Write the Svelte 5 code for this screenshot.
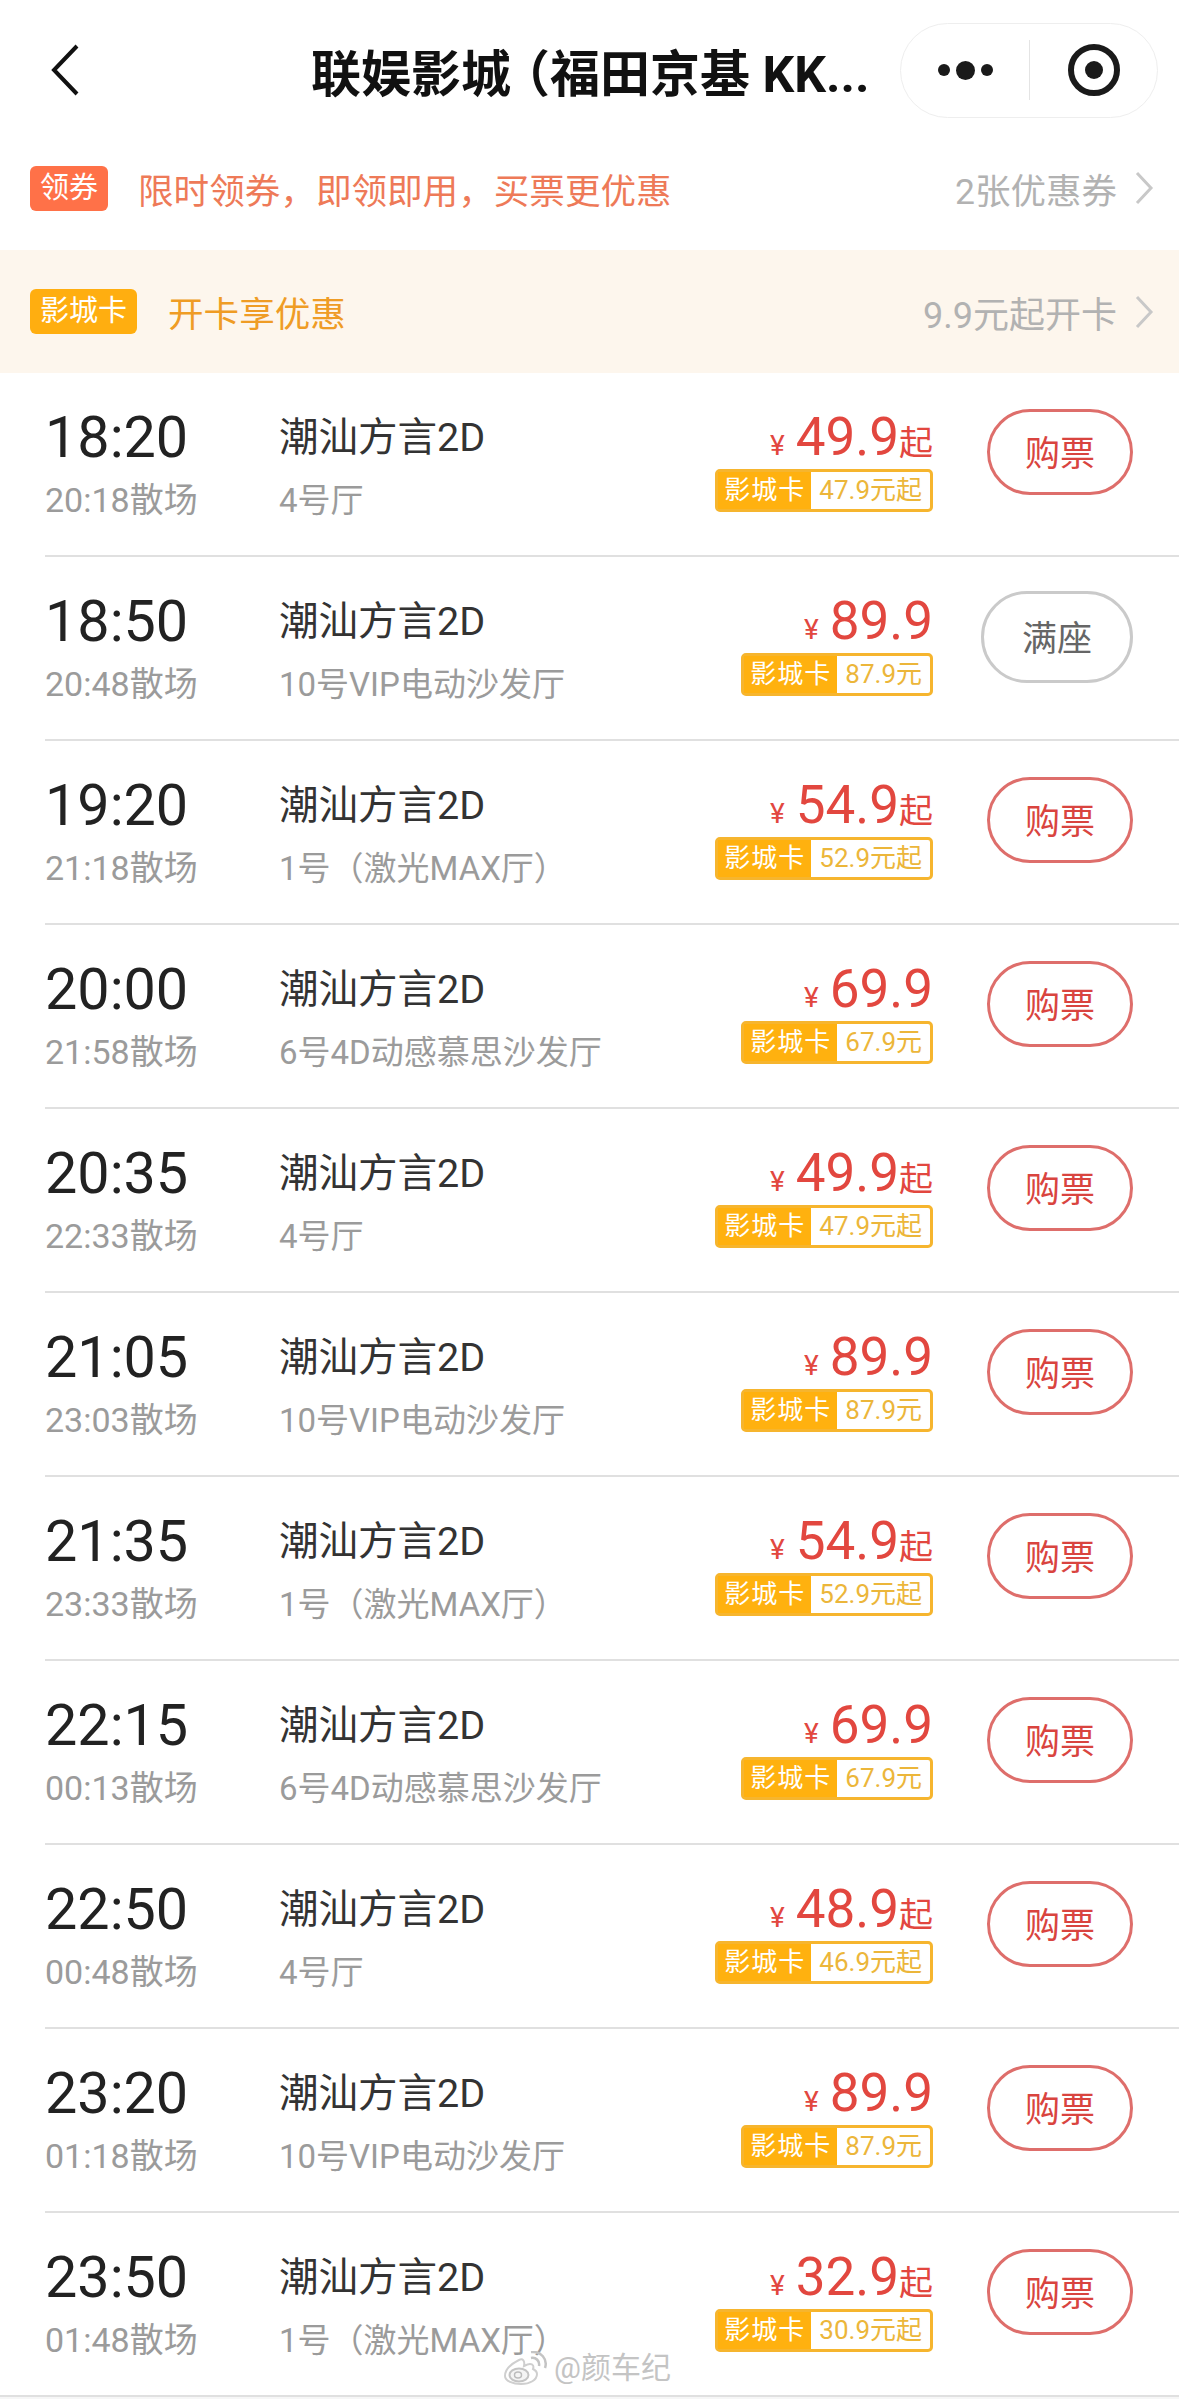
<script>
  const halls = {
    four: '4号厅',
    vip: '10号VIP电动沙发厅',
    max: '1号（激光MAX厅）',
    d4: '6号4D动感慕思沙发厅'
  };

  const shows = [
    { start: '18:20', end: '20:18', hall: halls.four, price: '49.9', card: '47.9', from: true },
    { start: '18:50', end: '20:48', hall: halls.vip, price: '89.9', card: '87.9', from: false, full: true },
    { start: '19:20', end: '21:18', hall: halls.max, price: '54.9', card: '52.9', from: true },
    { start: '20:00', end: '21:58', hall: halls.d4, price: '69.9', card: '67.9', from: false },
    { start: '20:35', end: '22:33', hall: halls.four, price: '49.9', card: '47.9', from: true },
    { start: '21:05', end: '23:03', hall: halls.vip, price: '89.9', card: '87.9', from: false },
    { start: '21:35', end: '23:33', hall: halls.max, price: '54.9', card: '52.9', from: true },
    { start: '22:15', end: '00:13', hall: halls.d4, price: '69.9', card: '67.9', from: false },
    { start: '22:50', end: '00:48', hall: halls.four, price: '48.9', card: '46.9', from: true },
    { start: '23:20', end: '01:18', hall: halls.vip, price: '89.9', card: '87.9', from: false },
    { start: '23:50', end: '01:48', hall: halls.max, price: '32.9', card: '30.9', from: true }
  ];
</script>

<div class="page">
  <header class="nav">
    <svg class="back" width="32" height="54" viewBox="0 0 32 54">
      <path d="M29 3 L6 27 L29 51" fill="none" stroke="#111" stroke-width="4" />
    </svg>
    <h1>联娱影城<span class="paren">（</span>福田京基 KK...</h1>
    <div class="capsule">
      <div class="dots">
        <span class="dot"></span>
        <span class="dot big"></span>
        <span class="dot"></span>
      </div>
      <span class="capsule-line"></span>
      <svg width="52" height="52" viewBox="0 0 52 52">
        <circle cx="26" cy="26" r="23" fill="none" stroke="#1a1a1a" stroke-width="6" />
        <circle cx="26" cy="26" r="9" fill="#1a1a1a" />
      </svg>
    </div>
  </header>

  <div class="promo coupon">
    <span class="tag coupon-tag">领券</span>
    <span class="promo-text coupon-text">限时领券，即领即用，买票更优惠</span>
    <span class="promo-right coupon-right">2张优惠券</span>
    <svg class="chev" width="19" height="34" viewBox="0 0 19 34">
      <path d="M2 2 L16 17 L2 32" fill="none" stroke="#c8c8c8" stroke-width="3" />
    </svg>
  </div>

  <div class="promo card">
    <span class="tag card-tag">影城卡</span>
    <span class="promo-text card-text">开卡享优惠</span>
    <span class="promo-right">9.9元起开卡</span>
    <svg class="chev" width="19" height="34" viewBox="0 0 19 34">
      <path d="M2 2 L16 17 L2 32" fill="none" stroke="#c8c8c8" stroke-width="3" />
    </svg>
  </div>

  <ul class="list">
    {#each shows as show}
      <li class="row">
        <div class="times">
          <div class="start">{show.start}</div>
          <div class="end">{show.end}散场</div>
        </div>
        <div class="info">
          <div class="lang">潮汕方言2D</div>
          <div class="hall">{show.hall}</div>
        </div>
        <div class="prices">
          <div class="price">
            <span class="yen">¥</span><span class="num">{show.price}</span>{#if show.from}<span class="from">起</span>{/if}
          </div>
          <div class="badge">
            <span class="badge-name">影城卡</span>
            <span class="badge-price">{show.card}元{show.from ? '起' : ''}</span>
          </div>
        </div>
        <div class="action">
          {#if show.full}
            <button class="btn full">满座</button>
          {:else}
            <button class="btn">购票</button>
          {/if}
        </div>
      </li>
    {/each}
  </ul>

  <div class="watermark">
    <svg width="44" height="34" viewBox="0 0 44 34">
      <path d="M15 9 C7 13 1 19 1 25 C1 30 9 33 17 33 C26 33 33 29 33 23 C33 20 31 19 29 18 C30 15 29 13 26 13 C24 13 22 14 20 15 C21 10 19 7 15 9 Z" fill="#fff" stroke="#cfcfcf" stroke-width="2" />
      <ellipse cx="15" cy="24" rx="9.500" ry="6.500" fill="#f4f4f4" stroke="#c4c4c4" stroke-width="2" />
      <ellipse cx="14" cy="24" rx="3.500" ry="3" fill="none" stroke="#bcbcbc" stroke-width="1.500" />
      <path d="M27 7 C32 6 36 10 35 15 M27 1 C37 0 44 8 41 17" fill="none" stroke="#c4c4c4" stroke-width="2.500" />
    </svg>
    <span>@颜车纪</span>
  </div>
</div>

<style>
  :global(body) {
    margin: 0;
    background: #fff;
  }

  .page {
    position: relative;
    width: 1179px;
    height: 2399px;
    overflow: hidden;
    background: #f6f6f6;
    font-family: Roboto, "Noto Sans CJK SC", sans-serif;
    color: #222;
  }

  .nav {
    height: 140px;
    box-sizing: border-box;
    padding: 0 21px 0 48px;
    display: flex;
    align-items: center;
    background: #fff;
  }

  .nav h1 {
    margin: 0 0 0 231px;
    font-size: 50px;
    font-weight: 700;
    color: #111;
    white-space: nowrap;
  }

  .paren {
    font-feature-settings: "halt";
    margin-left: 14px;
  }

  .back {
    flex-shrink: 0;
  }

  .capsule {
    margin-left: auto;
    width: 258px;
    height: 95px;
    box-sizing: border-box;
    border: 1.500px solid #eee;
    border-radius: 48px;
    display: flex;
    align-items: center;
    padding-left: 37px;
    flex-shrink: 0;
  }

  .dots {
    display: flex;
    align-items: center;
    gap: 6px;
  }

  .dot {
    width: 12px;
    height: 12px;
    border-radius: 50%;
    background: #1a1a1a;
  }

  .dot.big {
    width: 19px;
    height: 19px;
  }

  .capsule-line {
    width: 1px;
    height: 60px;
    background: #e4e4e4;
    margin: 0 38px 0 36px;
  }

  .promo {
    display: flex;
    align-items: center;
    box-sizing: border-box;
    padding: 0 25px 0 30px;
  }

  .coupon {
    height: 110px;
    padding-bottom: 14px;
    background: #fff;
  }

  .card {
    height: 123px;
    background: #fdf6ed;
  }

  .tag {
    height: 45px;
    line-height: 45px;
    border-radius: 6px;
    color: #fff;
    font-size: 29px;
    text-align: center;
  }

  .coupon-tag {
    width: 78px;
    background: #ff7148;
  }

  .card-tag {
    width: 107px;
    background: #ffae10;
  }

  .promo-text {
    font-size: 35.600px;
  }

  .coupon-text {
    margin-left: 30px;
    color: #ee7a58;
  }

  .card-text {
    margin-left: 31px;
    color: #ef9c25;
  }

  .promo-right {
    margin-left: auto;
    font-size: 36px;
    color: #b2b2b2;
  }

  .coupon-right {
    font-size: 35.500px;
  }

  .chev {
    margin-left: 18px;
  }

  .list {
    list-style: none;
    margin: 0;
    padding: 0;
    background: #fff;
  }

  .row {
    height: 184px;
    box-sizing: border-box;
    margin-left: 45px;
    border-bottom: 2px solid #e0e0e0;
    display: flex;
    padding-right: 46px;
  }

  .row:last-child {
    margin-left: 0;
    padding-left: 45px;
  }

  .times {
    width: 234px;
    flex-shrink: 0;
    padding-top: 35px;
  }

  .start {
    font-size: 57.500px;
    line-height: 60px;
    color: #222;
  }

  .end,
  .hall {
    font-size: 33px;
    line-height: 44px;
    color: #9b9b9b;
    white-space: nowrap;
  }

  .end {
    margin-top: 10px;
    font-size: 34px;
  }

  .hall {
    margin-top: 11px;
  }

  .info {
    flex: 1;
    padding-top: 35px;
  }

  .lang {
    font-size: 39.500px;
    line-height: 60px;
    color: #333;
    white-space: nowrap;
  }

  .prices {
    flex-shrink: 0;
    padding-top: 34px;
    display: flex;
    flex-direction: column;
    align-items: flex-end;
  }

  .price {
    height: 60px;
    line-height: 60px;
    color: #e2473f;
    white-space: nowrap;
    display: flex;
    align-items: baseline;
  }

  .yen {
    font-size: 28px;
    margin-right: 11px;
  }

  .num {
    font-size: 53px;
  }

  .from {
    font-size: 34px;
  }

  .badge {
    margin-top: 2px;
    height: 43px;
    box-sizing: border-box;
    border: 3px solid #f6b52e;
    border-radius: 5px;
    display: flex;
    font-size: 26px;
    line-height: 37px;
    white-space: nowrap;
  }

  .badge-name {
    background: #ffb10f;
    color: #fff;
    padding: 0 6px;
    letter-spacing: 1px;
  }

  .badge-price {
    color: #ecb63a;
    padding: 0 8px;
  }

  .action {
    flex-shrink: 0;
    width: 152px;
    margin-left: 48px;
    padding-top: 36px;
    display: flex;
    justify-content: flex-end;
    align-items: flex-start;
  }

  .btn {
    width: 146px;
    height: 86px;
    box-sizing: border-box;
    background: #fff;
    border: 3px solid #de6e6b;
    border-radius: 43px;
    color: #d9443f;
    font-family: inherit;
    font-size: 35px;
    padding: 0 0 3px;
  }

  .btn.full {
    width: 152px;
    height: 92px;
    border-radius: 46px;
    margin-top: -2px;
    border-color: #cacaca;
    color: #666;
  }

  .watermark {
    position: absolute;
    left: 504px;
    top: 2351px;
    display: flex;
    align-items: center;
    gap: 6px;
    font-size: 30px;
    line-height: 34px;
    color: #c4c4c4;
    text-shadow: 0 0 3px #fff, 0 0 4px #fff;
  }
</style>
